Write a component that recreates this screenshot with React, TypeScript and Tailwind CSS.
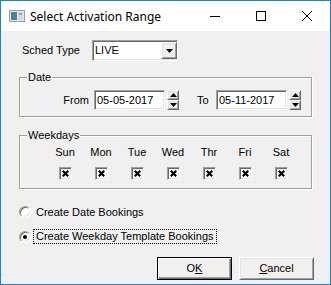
import React from "react";

const DAYS = ["Sun", "Mon", "Tue", "Wed", "Thr", "Fri", "Sat"];

// classic win32 3D edges
const SUNKEN =
  "border border-t-[#a0a0a0] border-l-[#a0a0a0] border-b-white border-r-white shadow-[inset_1px_1px_0_#696969,inset_-1px_-1px_0_#e3e3e3]";
const RAISED =
  "border border-t-white border-l-white border-b-[#696969] border-r-[#696969] shadow-[inset_1px_1px_0_#e3e3e3,inset_-1px_-1px_0_#a0a0a0] bg-[#f0f0f0]";
const ETCHED = "border border-[#a0a0a0] shadow-[inset_1px_1px_0_#fff,1px_1px_0_#fff]";

function AppIcon() {
  return (
    <svg width="16" height="16" viewBox="0 0 16 16">
      <defs>
        <linearGradient id="g" x1="0" y1="0" x2="1" y2="1">
          <stop offset="0" stopColor="#3d8c6a" />
          <stop offset="1" stopColor="#4f7fbf" />
        </linearGradient>
      </defs>
      <rect x="0.5" y="2.5" width="15" height="11" fill="#e6e8ea" stroke="#9a9ea3" />
      <rect x="2" y="4" width="6" height="8" fill="url(#g)" />
      <rect x="9" y="4" width="5" height="8" fill="#d3d8dd" />
      <rect x="10" y="5" width="3" height="2" fill="#8fa7bd" />
    </svg>
  );
}

function Spinner() {
  return (
    <div className="flex h-[20px] w-[12px] flex-col">
      <div className={`${RAISED} flex h-[10px] items-center justify-center`}>
        <svg width="7" height="4" viewBox="0 0 7 4">
          <path d="M0 4 L3.5 0 L7 4 Z" fill="#000" />
        </svg>
      </div>
      <div className={`${RAISED} flex h-[10px] items-center justify-center`}>
        <svg width="7" height="4" viewBox="0 0 7 4">
          <path d="M0 0 L7 0 L3.5 4 Z" fill="#000" />
        </svg>
      </div>
    </div>
  );
}

function DateField({ value }: { value: string }) {
  return (
    <div className={`${SUNKEN} flex h-[20px] w-[71px] items-center bg-white pl-[2px]`}>
      {value}
    </div>
  );
}

function CheckBox() {
  return (
    <div className={`${SUNKEN} flex h-[13px] w-[13px] items-center justify-center bg-white`}>
      <svg width="7" height="7" viewBox="0 0 7 7">
        <path d="M0.8 0.8 L6.2 6.2 M6.2 0.8 L0.8 6.2" stroke="#000" strokeWidth="2.2" />
      </svg>
    </div>
  );
}

function Radio({ checked }: { checked?: boolean }) {
  return (
    <div
      className={`${SUNKEN} flex h-[12px] w-[12px] shrink-0 items-center justify-center rounded-full bg-white`}
    >
      {checked && <div className="h-[4px] w-[4px] rounded-full bg-black" />}
    </div>
  );
}

export default function App() {
  return (
    <div className="flex h-[285px] w-[331px] flex-col border border-[#1883d7] bg-white font-['Liberation_Sans',Arial,sans-serif] text-[11px] leading-[13px] text-black">
      {/* title bar */}
      <div className="flex h-[30px] shrink-0 items-center bg-white">
        <div className="ml-[8px] flex items-center">
          <AppIcon />
        </div>
        <span className="ml-[5px] font-['Noto_Sans',sans-serif] text-[12px]">Select Activation Range</span>
        <div className="ml-auto flex h-full">
          <div className="flex w-[46px] items-center justify-center">
            <div className="h-px w-[10px] bg-black" />
          </div>
          <div className="flex w-[46px] items-center justify-center">
            <div className="h-[10px] w-[10px] border border-black" />
          </div>
          <div className="flex w-[46px] items-center justify-center">
            <svg width="10" height="10" viewBox="0 0 10 10">
              <path d="M0 0 L10 10 M10 0 L0 10" stroke="#000" strokeWidth="1" />
            </svg>
          </div>
        </div>
      </div>

      {/* client area */}
      <div className="flex flex-1 flex-col bg-[#f0f0f0] pl-[18px] pt-[9px]">
        <div className="flex h-[21px] items-center">
          <span className="w-[73px] pl-[3px]">Sched Type</span>
          <div className={`${SUNKEN} flex h-[21px] w-[86px] items-center bg-white pl-[2px]`}>
            <span className="flex-1">LIVE</span>
            <div className={`${RAISED} flex h-[17px] w-[16px] items-center justify-center`}>
              <svg width="7" height="4" viewBox="0 0 7 4">
                <path d="M0 0 L7 0 L3.5 4 Z" fill="#000" />
              </svg>
            </div>
          </div>
        </div>

        <div className={`${ETCHED} relative mt-[16px] h-[40px] w-[293px]`}>
          <span className="absolute left-[7px] top-[-7px] bg-[#f0f0f0] px-[1px]">Date</span>
          <div className="mt-[12px] flex items-center">
            <span className="w-[74px] pr-[5px] text-right">From</span>
            <DateField value="05-05-2017" />
            <div className="ml-[2px]">
              <Spinner />
            </div>
            <span className="ml-[18px] w-[19px]">To</span>
            <DateField value="05-11-2017" />
            <div className="ml-[2px]">
              <Spinner />
            </div>
          </div>
        </div>

        <div className={`${ETCHED} relative mt-[18px] h-[54px] w-[293px]`}>
          <span className="absolute left-[7px] top-[-7px] bg-[#f0f0f0] px-[1px]">Weekdays</span>
          <div className="grid grid-cols-[repeat(7,36px)] pl-[27px] pt-[10px]">
            {DAYS.map((d) => (
              <div key={d} className="flex flex-col items-center">
                <span>{d}</span>
                <div className="mt-[8px]">
                  <CheckBox />
                </div>
              </div>
            ))}
          </div>
        </div>

        <div className="mt-[15px] flex h-[16px] items-center">
          <Radio />
          <span className="ml-[5px]">Create Date Bookings</span>
        </div>
        <div className="mt-[9px] flex h-[15px] items-center">
          <Radio checked />
          <span className="ml-[2px] border border-dotted border-black px-[2px]">
            Create Weekday Template Bookings
          </span>
        </div>

        <div className="ml-[138px] mt-[13px] flex gap-[7px]">
          <button className="flex h-[23px] w-[75px] items-center justify-center border border-black bg-[#f0f0f0] shadow-[inset_1px_1px_0_#fff,inset_-1px_-1px_0_#696969,inset_-2px_-2px_0_#a0a0a0]">
            <span>
              O<span className="underline">K</span>
            </span>
          </button>
          <button className={`${RAISED} flex h-[23px] w-[75px] items-center justify-center`}>
            <span>
              <span className="underline">C</span>ancel
            </span>
          </button>
        </div>
      </div>
    </div>
  );
}
